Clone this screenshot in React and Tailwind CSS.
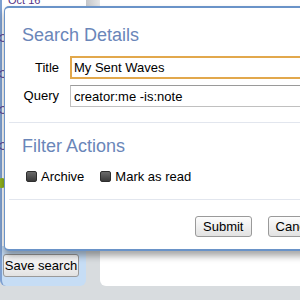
import React from "react";

const Checkbox = ({ label }) => (
  <label className="flex items-center gap-[4px]">
    <span className="w-[11px] h-[11px] rounded-[2px] border border-[#2e2e2e] bg-gradient-to-b from-[#6a6a6a] to-[#3a3a3a]"></span>
    <span>{label}</span>
  </label>
);

const Button = ({ children, className = "" }) => (
  <button
    className={
      "h-[21px] rounded-[3px] border border-[#9a9a9a] bg-gradient-to-b from-[#fdfdfd] to-[#e2e2e2] text-[13px] text-black leading-none " +
      className
    }
  >
    {children}
  </button>
);

const App = () => {
  return (
    <div
      className="relative w-[300px] h-[300px] overflow-hidden bg-[#d8dcdf]"
      style={{ fontFamily: '"Liberation Sans", Arial, sans-serif' }}
    >
      {/* BACKGROUND PANELS */}
      <div className="flex h-[286px] gap-[14px]">
        <div className="w-[86px] h-full bg-[#c6ddf5] rounded-b-[6px] border-l-2 border-[#7d9fd0] flex flex-col">
          <div className="flex-1 bg-white flex flex-col gap-[28px] text-[11px] text-[#553388] leading-none">
            <span className="mt-[-5px] pl-[6px]">Oct 16</span>
            <span className="w-[8px] h-[8px] rounded-full border border-[#553388] ml-[-3px]"></span>
            <span className="w-[8px] h-[8px] rounded-full border border-[#553388] ml-[-3px]"></span>
            <span className="w-[8px] h-[8px] rounded-full border border-[#553388] ml-[-3px]"></span>
            <span className="w-[8px] h-[8px] rounded-full border border-[#553388] ml-[-3px]"></span>
            <span className="w-[6px] h-[10px] rounded-full bg-[#8fb21c] ml-[-3px]"></span>
          </div>
          <div className="h-[40px] pt-[7px] pl-[1px]">
            <Button className="w-[76px] h-[23px]">Save search</Button>
          </div>
        </div>
        <div className="flex-1 h-full bg-white rounded-bl-[6px]">
          <div className="ml-[-14px] w-[14px] h-[8px] bg-gradient-to-r from-[#c4c6c9] to-[#e6e7e8]"></div>
        </div>
      </div>

      {/* DIALOG */}
      <div className="absolute left-[4px] top-[6px] w-[320px] h-[245px] bg-white border-t-2 border-l border-b-2 border-[#6a93c8] rounded-tl-[5px] rounded-bl-[5px] shadow-[0_5px_7px_rgba(0,0,0,0.35)] text-[13px] text-black">
        <div className="pl-[17px] pr-[18px] pt-[18px]">
          <h2 className="text-[18px] leading-none text-[#6a86b9]">Search Details</h2>
          <div className="mt-[12px] flex flex-col gap-[6px]">
            <div className="flex items-center">
              <span className="w-[37px] text-right">Title</span>
              <input
                readOnly
                value="My Sent Waves"
                className="ml-[11px] flex-1 h-[23px] border-2 border-[#e2a84c] px-[2px] text-[13px] outline-none"
              />
            </div>
            <div className="flex items-center">
              <span className="w-[37px] text-right">Query</span>
              <input
                readOnly
                value="creator:me -is:note"
                className="ml-[11px] flex-1 h-[22px] border border-[#c0c0c0] border-t-[#9a9a9a] px-[3px] text-[13px] outline-none"
              />
            </div>
          </div>
        </div>
        <div className="mt-[15px] mx-[4px] h-[1px] bg-[#e2e6ee]"></div>
        <div className="pl-[17px] pr-[18px] pt-[14px]">
          <h2 className="text-[18px] leading-none text-[#6a86b9]">Filter Actions</h2>
          <div className="mt-[12px] ml-[4px] flex gap-[16px]">
            <Checkbox label="Archive" />
            <Checkbox label="Mark as read" />
          </div>
        </div>
        <div className="mt-[12px] mx-[4px] h-[1px] bg-[#e2e6ee]"></div>
        <div className="pl-[190px] pt-[16px] flex gap-[16px]">
          <Button className="w-[62px]">Submit</Button>
          <Button className="w-[62px]">Cancel</Button>
        </div>
      </div>
    </div>
  );
};

export default App;
